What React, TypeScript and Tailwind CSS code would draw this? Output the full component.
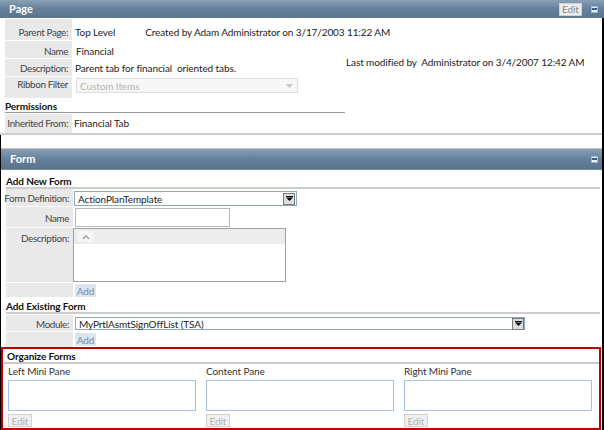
import React from "react";

const font = { fontFamily: "Lato, 'Noto Sans', sans-serif" };

function CollapseIcon() {
  return (
    <span className="flex h-[7px] w-[7px] items-center justify-center border border-[#9fb6cc] bg-[#e8f0f8]">
      <span className="h-[2px] w-[5px] bg-[#2f5f93]" />
    </span>
  );
}

function SectionHeader({ title, edit, h, pr }: { title: string; edit?: boolean; h: string; pr: string }) {
  return (
    <div className={"flex items-center bg-gradient-to-b from-[#8aa0b5] via-[#64809b] to-[#58748f] pl-[9px] " + h + " " + pr}>
      <span className="text-[11px] font-bold tracking-normal text-white">{title}</span>
      <div className="ml-auto flex items-center gap-[9px]">
        {edit && (
          <span className="flex h-[13px] w-[23px] items-center justify-center border border-[#c9d2da] bg-[#ececec] text-[10px] text-[#8a8a8a]">
            Edit
          </span>
        )}
        <CollapseIcon />
      </div>
    </div>
  );
}

function Label({ children, h, pt }: { children?: React.ReactNode; h: string; pt: string }) {
  return (
    <div
      className={
        "flex w-[67px] shrink-0 justify-end whitespace-nowrap bg-[#e9e9e9] pr-[4px] text-[9.8px] tracking-[-0.35px] text-[#444] " +
        h +
        " " +
        pt
      }
    >
      <span>{children}</span>
    </div>
  );
}

function DropArrow() {
  return (
    <span className="flex h-[12px] w-[12px] items-center justify-center border border-[#7a7a7a] bg-[#dcdcdc]">
      <svg width="7" height="5" viewBox="0 0 7 5">
        <rect x="0" y="0" width="7" height="1" fill="#000" />
        <path d="M0 1.5 H7 L3.5 5 Z" fill="#000" />
      </svg>
    </span>
  );
}

function SmallButton({ label }: { label: string }) {
  return (
    <span className="flex h-[13px] w-[24px] items-center justify-center border border-[#d0d0d0] bg-[#f0f0f0] text-[10px] text-[#b0b0b0]">
      {label}
    </span>
  );
}

function AddButton() {
  return (
    <span className="flex h-[13px] w-[21px] items-center justify-center bg-[#dde6ef] text-[10px] text-[#6f8fb5]">
      Add
    </span>
  );
}

function Pane({ title }: { title: string }) {
  return (
    <div className="flex w-[188px] flex-col">
      <div className="h-[14px] leading-[14px] text-[#333]">{title}</div>
      <div className="mt-[2px] h-[31px] border border-[#a8c3e0] bg-white" />
      <div className="mt-[3px]">
        <SmallButton label="Edit" />
      </div>
    </div>
  );
}

export default function App() {
  return (
    <div
      className="h-[430px] w-[604px] overflow-hidden whitespace-nowrap bg-white text-[10px] leading-[14px] tracking-[-0.1px] text-[#222]"
      style={font}
    >
      <SectionHeader title="Page" edit h="h-[18px]" pr="pr-[6px]" />
      <div className="border-r-2 border-black">
        {/* Page body */}
        <div className="pl-[5px] pt-[1px]">
          <div className="flex flex-col gap-[1px]">
            <div className="flex h-[21px]">
              <Label h="h-[21px]" pt="pt-[6px]">Parent Page:</Label>
              <div className="pl-[3px] pt-[6px]">Top Level</div>
              <div className="pl-[30px] pt-[6px]">Created by Adam Administrator on 3/17/2003 11:22 AM</div>
            </div>
            <div className="flex h-[17px]">
              <Label h="h-[17px]" pt="pt-[3px]">Name</Label>
              <div className="pl-[4px] pt-[3px]">Financial</div>
            </div>
            <div className="flex h-[17px]">
              <Label h="h-[17px]" pt="pt-[2px]">Description:</Label>
              <div className="w-[274px] shrink-0 pl-[3px] pt-[2px]">Parent tab for financial&nbsp; oriented tabs.</div>
              <div className="-mt-[4px] shrink-0">Last modified by&nbsp; Administrator on 3/4/2007 12:42 AM</div>
            </div>
            <div className="flex h-[21px]">
              <Label h="h-[21px]" pt="pt-0">Ribbon Filter</Label>
              <div className="pl-[4px] pt-[1px]">
                <div className="flex h-[15px] w-[222px] items-center justify-between border border-[#dcdcdc] bg-[#f7f7f7] pl-[3px] pr-[4px] text-[#b5b5b5]">
                  <span>Custom Items</span>
                  <svg width="7" height="4" viewBox="0 0 7 4">
                    <path d="M0 0 H7 L3.5 4 Z" fill="#c8c8c8" />
                  </svg>
                </div>
              </div>
            </div>
          </div>
          <div className="h-[15px] w-[340px] border-b border-[#9a9a9a] pt-[1px] font-bold text-[#111]">Permissions</div>
          <div className="mt-[1px] flex h-[19px]">
            <Label h="h-[19px]" pt="pt-[2px]">Inherited From:</Label>
            <div className="pl-[2px] pt-[2px]">Financial Tab</div>
          </div>
        </div>
        <div className="h-[2px] bg-[#cfcfcf]" />

        {/* Form */}
        <div className="border-l border-black pt-[13px]">
          <div className="border-t border-[#c4c4c4]">
            <SectionHeader title="Form" h="h-[20px]" pr="pr-[4px]" />
            <div className="h-[1px] bg-[#7d8d9c]" />
          </div>
          <div className="pl-[5px] pr-[2px]">
            <div className="h-[19px] border-b-2 border-[#cdcdcd] pt-[4px] font-bold text-[#111]">Add New Form</div>
            <div className="flex flex-col gap-[1px]">
              <div className="flex h-[17px]">
                <Label h="h-[17px]" pt="pt-[2px]">Form Definition:</Label>
                <div className="pl-[1px] pt-[2px]">
                  <div className="flex h-[15px] w-[223px] items-center justify-between border border-[#8aa8c8] bg-white pl-[3px] pr-[1px]">
                    <span>ActionPlanTemplate</span>
                    <DropArrow />
                  </div>
                </div>
              </div>
              <div className="flex h-[20px]">
                <Label h="h-[20px]" pt="pt-[4px]">Name</Label>
                <div className="pl-[2px] pt-[1px]">
                  <div className="h-[19px] w-[155px] border border-[#b8b8b8] bg-white" />
                </div>
              </div>
              <div className="flex h-[54px]">
                <Label h="h-[54px]" pt="pt-[3px]">Description:</Label>
                <div className="h-[54px] w-[213px] border border-[#a0a0a0] bg-white">
                  <div className="flex h-[15px] items-center bg-[#ececec] pl-[4px]">
                    <span className="flex h-[11px] w-[16px] items-center justify-center bg-[#f6f6f6]">
                      <svg width="8" height="6" viewBox="0 0 8 6">
                        <path d="M1 5 L4 2 L7 5" stroke="#a8a8a8" strokeWidth="1.6" fill="none" />
                      </svg>
                    </span>
                  </div>
                </div>
              </div>
              <div className="flex h-[14px]">
                <Label h="h-[14px]" pt="pt-0" />
                <div className="pl-[2px] pt-[1px]">
                  <AddButton />
                </div>
              </div>
            </div>
            <div className="mt-[1px] h-[16px] border-b-2 border-[#cdcdcd] pt-[1px] font-bold text-[#111]">Add Existing Form</div>
            <div className="mt-[1px] flex flex-col gap-[1px]">
              <div className="flex h-[16px]">
                <Label h="h-[16px]" pt="pt-[2px]">Module:</Label>
                <div className="pl-[2px] pt-[2px]">
                  <div className="flex h-[13px] w-[450px] items-center justify-between border border-[#8aa8c8] bg-white pl-[3px]">
                    <span>MyPrtlAsmtSignOffList (TSA)</span>
                    <DropArrow />
                  </div>
                </div>
              </div>
              <div className="flex h-[15px]">
                <Label h="h-[15px]" pt="pt-0" />
                <div className="pl-[2px] pt-[1px]">
                  <AddButton />
                </div>
              </div>
            </div>
          </div>

          {/* Organize Forms */}
          <div className="mr-[1px] h-[83px] border-2 border-[#c00000] pl-[1px]">
            <div className="h-[15px] border-b-2 border-[#c9c9c9] pl-[3px] font-bold text-[#111]">Organize Forms</div>
            <div className="flex gap-[10px] pl-[4px]">
              <Pane title="Left Mini Pane" />
              <Pane title="Content Pane" />
              <Pane title="Right Mini Pane" />
            </div>
          </div>
        </div>
      </div>
    </div>
  );
}
